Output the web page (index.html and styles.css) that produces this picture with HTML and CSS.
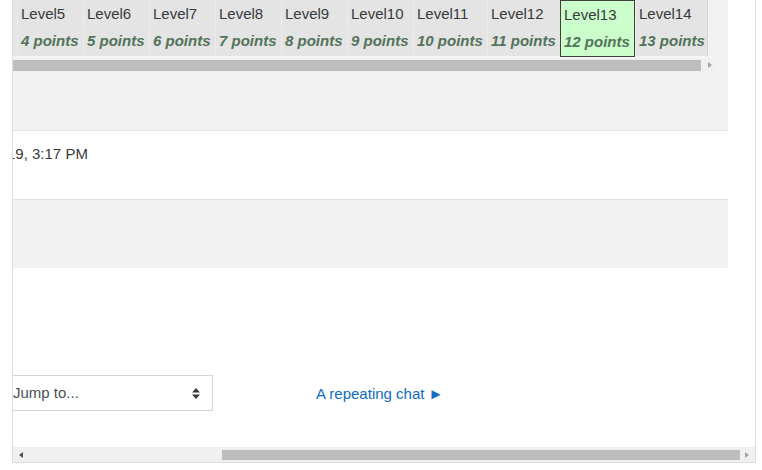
FILE: index.html
```html
<!DOCTYPE html>
<html lang="en">
<head>
<meta charset="utf-8">
<title>Chat</title>
<link rel="stylesheet" href="styles.css">
</head>
<body>
<div class="frame">
  <div class="content">
    <div class="main">
      <div class="row row-gray row-levels">
        <div class="levels-scroll">
          <div class="levels">
            <div class="level level-cut"></div>
            <div class="level"><div class="lname">Level5</div><div class="lpts">4 points</div></div>
            <div class="level"><div class="lname">Level6</div><div class="lpts">5 points</div></div>
            <div class="level"><div class="lname">Level7</div><div class="lpts">6 points</div></div>
            <div class="level"><div class="lname">Level8</div><div class="lpts">7 points</div></div>
            <div class="level"><div class="lname">Level9</div><div class="lpts">8 points</div></div>
            <div class="level"><div class="lname">Level10</div><div class="lpts">9 points</div></div>
            <div class="level level-wide"><div class="lname">Level11</div><div class="lpts">10 points</div></div>
            <div class="level level-mid"><div class="lname">Level12</div><div class="lpts">11 points</div></div>
            <div class="level level-current"><div class="lname">Level13</div><div class="lpts">12 points</div></div>
            <div class="level level-mid level-last"><div class="lname">Level14</div><div class="lpts">13 points</div></div>
          </div>
          <div class="hscroll hscroll-small">
            <div class="track"><div class="thumb thumb-small"></div></div>
            <span class="arrow arrow-right"></span>
          </div>
        </div>
      </div>
      <div class="row row-white">
        <div class="stamp">19, 3:17 PM</div>
      </div>
      <div class="row row-gray row-empty"></div>
    </div>
    <div class="nav">
      <div class="jump">
        <span class="jump-label">Jump to...</span>
        <svg class="jump-caret" width="8" height="11" viewBox="0 0 8 11"><path d="M0 4.5 L4 0 L8 4.5 Z M0 6.5 L4 11 L8 6.5 Z" fill="#343a40"/></svg>
      </div>
      <a class="next-link" href="#">A repeating chat ►</a>
    </div>
  </div>
  <div class="hscroll hscroll-big">
    <span class="arrow arrow-left"></span>
    <div class="track track-big"><div class="thumb thumb-big"></div></div>
    <span class="arrow arrow-right"></span>
  </div>
</div>
</body>
</html>
```

FILE: styles.css
```css
* { box-sizing: border-box; }
html, body { margin: 0; padding: 0; background: #fff; }
body {
  font-family: "Liberation Sans", Arial, sans-serif;
  font-size: 15px;
  color: #373a3c;
}
.frame {
  margin-left: 12px;
  width: 744px;
  height: 463px;
  border-left: 1px solid #dedede;
  border-right: 1px solid #dedede;
  border-bottom: 1px solid #dedede;
  display: flex;
  flex-direction: column;
  overflow: hidden;
}
.content { flex: 1; display: flex; flex-direction: column; }
.main { width: 715px; }
.row-gray { background: #f2f2f2; }
.row-white { background: #fff; }
.row + .row { border-top: 1px solid #dee2e6; }
.row-levels { height: 130px; }
.row-white { height: 69px; padding-top: 12px; overflow: hidden; }
.row-empty { height: 69px; }
.stamp { margin-left: -6px; line-height: 22px; white-space: nowrap; }

.levels-scroll { width: 701px; overflow: hidden; background: #ececec; }
.levels { display: flex; align-items: flex-start; height: 57px; background: #f2f2f2; }
.level {
  flex: 0 0 66px;
  height: 56px;
  background: #e4e4e4;
  border-left: 1px solid #ececec;
  padding: 3px 0 0 3px;
  white-space: nowrap;
}
.level-cut { flex-basis: 4px; border-left: 0; padding: 0; }
.level-wide { flex-basis: 74px; }
.level-mid { flex-basis: 73px; }
.level-last { border-right: 1px solid #d6d6d6; }
.level-current {
  flex-basis: 75px;
  height: 57px;
  background: #ccfecc;
  border: 1px solid #3f3f3f;
  padding-top: 3px;
}
.lname { line-height: 22px; color: #373a3c; }
.lpts {
  margin-top: 5px;
  line-height: 22px;
  font-weight: bold;
  font-style: italic;
  color: #52735a;
}

.hscroll { display: flex; align-items: center; background: #f0f0f0; height: 15px; }
.hscroll-small { border-top: 1px solid #f8f8f8; height: 15px; }
.track { flex: 1; height: 100%; display: flex; align-items: center; }
.thumb { background: #bdbdbd; height: 11px; }
.thumb-small { width: 688px; }
.hscroll-small .arrow-right { margin: 0 4px 0 7px; }
.arrow { width: 0; height: 0; border-top: 3.5px solid transparent; border-bottom: 3.5px solid transparent; }
.arrow-right { border-left: 4px solid #a3a3a3; }
.arrow-left { border-right: 4px solid #505050; }
.hscroll-big { height: 15px; }
.hscroll-big .arrow-left { margin: 0 0 0 6px; }
.track-big { padding-left: 199px; }
.hscroll-big .arrow-right { margin: 0 6px 0 5px; }
.thumb-big { flex: 1; height: 10px; }

.nav {
  margin-top: 107px;
  margin-bottom: 35px;
  display: flex;
  align-items: center;
  height: 36px;
}
.jump {
  margin-left: -13px;
  width: 213px;
  height: 36px;
  border: 1px solid #ced4da;
  padding: 0 12px;
  display: flex;
  align-items: center;
  justify-content: space-between;
  color: #495057;
  line-height: 22px;
}
.next-link {
  margin-left: 103px;
  color: #0f6cbf;
  text-decoration: none;
  white-space: nowrap;
}
```
